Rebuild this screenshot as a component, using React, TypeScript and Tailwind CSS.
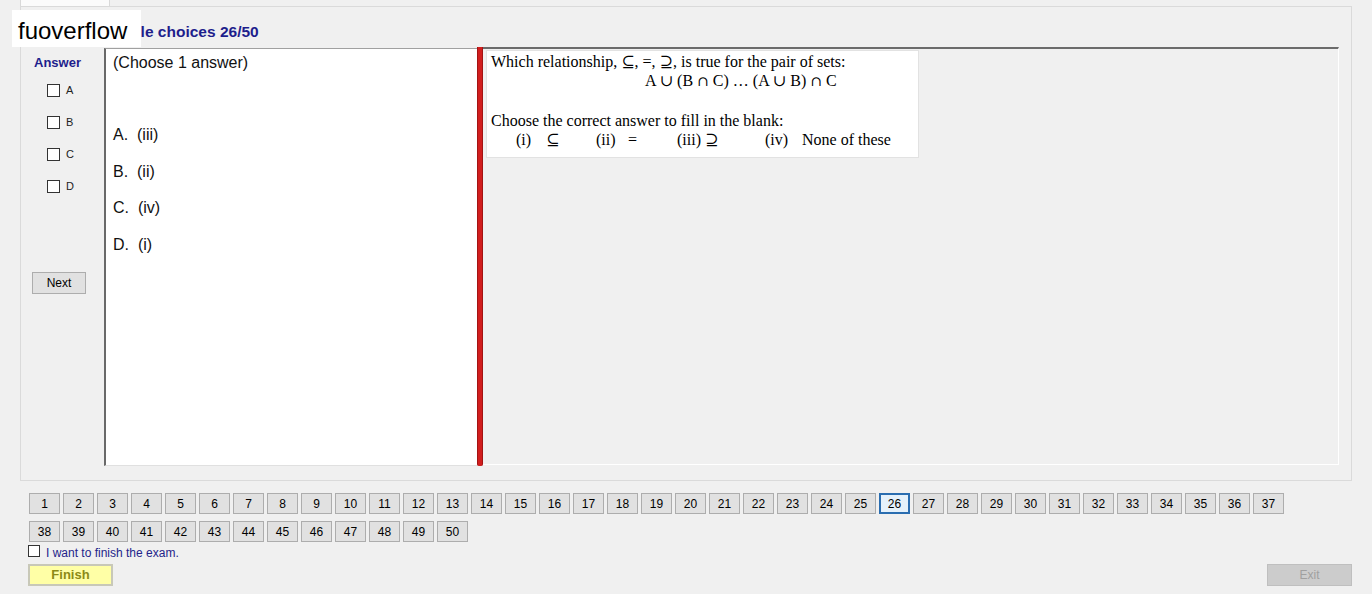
import React from 'react';

const sans = { fontFamily: '"Liberation Sans", Arial, sans-serif' };
const serif = { fontFamily: '"Liberation Serif", "Times New Roman", "DejaVu Serif", serif' };

const QuestionButton = ({ n, active }: { n: number; active?: boolean }) => (
  <div
    className={
      active
        ? 'w-[31px] h-[21px] flex items-center justify-center text-[12px] text-black bg-[#e5f1fb] border-2 border-[#2a6db0]'
        : 'w-[31px] h-[21px] flex items-center justify-center text-[12px] text-black bg-[#e1e1e1] border border-[#adadad]'
    }
  >
    {n}
  </div>
);

const AnswerBox = ({ label }: { label: string }) => (
  <div className="flex items-center gap-[6px] h-[14px]">
    <div className="w-[13px] h-[13px] bg-white border border-[#333]"></div>
    <span className="text-[11px] text-[#222] leading-none">{label}</span>
  </div>
);

export default function App() {
  const current = 26;

  return (
    <div className="w-[1372px] h-[594px] bg-[#f0f0f0] relative overflow-hidden" style={sans}>
      {/* tab header */}
      <div className="h-[6px] flex">
        <div className="ml-[20px] w-[90px] h-full bg-[#fbfbfb] border-x border-[#d9d9d9]"></div>
      </div>

      {/* tab page */}
      <div className="ml-[20px] w-[1332px] h-[475px] border border-[#dadada] bg-[#f0f0f0]">
        <div className="h-[40px] flex items-end pb-[8px]">
          <div className="ml-[74px] text-[15.5px] font-bold text-[#1e1e8c] leading-none">Multiple choices 26/50</div>
        </div>

        <div className="flex h-[419px]">
          {/* answer column */}
          <div className="w-[83px] flex flex-col">
            <div className="mt-[9px] ml-[13px] text-[13px] font-bold text-[#1e1e8c] leading-none">Answer</div>
            <div className="ml-[26px] mt-[14px] flex flex-col gap-[18px]">
              <AnswerBox label="A" />
              <AnswerBox label="B" />
              <AnswerBox label="C" />
              <AnswerBox label="D" />
            </div>
            <div className="ml-[11px] mt-[79px] w-[54px] h-[22px] bg-[#e1e1e1] border border-[#adadad] flex items-center justify-center text-[12px] text-black">
              Next
            </div>
          </div>

          {/* options panel */}
          <div className="w-[373px] h-[418px] mt-[1px] bg-white border-t border-t-[#a0a0a0] border-l-2 border-l-[#696969] border-b border-b-[#e0e0e0] px-[7px] pt-[5px] text-[16px] text-[#111]">
            <div className="leading-[18px]">(Choose 1 answer)</div>
            <div className="mt-[45px] flex flex-col">
              <div className="leading-[36.5px]">A.&nbsp; (iii)</div>
              <div className="leading-[36.5px]">B.&nbsp; (ii)</div>
              <div className="leading-[36.5px]">C.&nbsp; (iv)</div>
              <div className="leading-[36.5px]">D.&nbsp; (i)</div>
            </div>
          </div>

          {/* splitter */}
          <div className="w-[6px] h-[419px] bg-[#d11e1e] border-x border-[#a31313] rounded-b-[2px]"></div>

          {/* question panel */}
          <div className="w-[856px] h-[418px] border-t-2 border-t-[#6b6b6b] border-r border-r-white border-b border-b-white p-[1px] pl-[3px]">
            <div className="w-[433px] h-[108px] bg-white border border-[#e2e2e2] pl-[4px] text-[16px] text-black" style={serif}>
              <div className="leading-[19px] mt-[1px]">Which relationship, ⊆, =, ⊇, is true for the pair of sets:</div>
              <div className="leading-[19px] pl-[154px]">
                A ∪ (B <span style={{ fontFamily: '"DejaVu Serif", serif' }} className="text-[14px]">∩</span> C) … (A ∪ B){' '}
                <span style={{ fontFamily: '"DejaVu Serif", serif' }} className="text-[14px]">∩</span> C
              </div>
              <div className="leading-[19px] mt-[20px]">Choose the correct answer to fill in the blank:</div>
              <div className="leading-[19px] pl-[25px] flex">
                <span className="w-[30px]">(i)</span>
                <span className="w-[50px]">⊆</span>
                <span className="w-[32px]">(ii)</span>
                <span className="w-[49px]">=</span>
                <span className="w-[28px]">(iii)</span>
                <span className="w-[60px]">⊇</span>
                <span className="w-[37px]">(iv)</span>
                <span>None of these</span>
              </div>
            </div>
          </div>
        </div>
      </div>

      {/* question navigator */}
      <div className="pl-[29px] pt-[12px] w-[1300px]">
        <div className="flex flex-wrap gap-x-[3px] gap-y-[7px] w-[1260px]">
          {Array.from({ length: 50 }, (_, i) => (
            <QuestionButton key={i} n={i + 1} active={i + 1 === current} />
          ))}
        </div>
      </div>

      <div className="pl-[28px] mt-[2px] flex items-center gap-[6px] h-[14px]">
        <div className="w-[12px] h-[12px] bg-white border border-[#333]"></div>
        <span className="text-[12px] text-[#24248a] leading-none mt-[3px]">I want to finish the exam.</span>
      </div>

      <div className="pl-[28px] pr-[20px] mt-[6px] flex justify-between">
        <div className="w-[85px] h-[22px] bg-[#ffffa6] border-2 border-[#c8c8b8] flex items-center justify-center text-[13px] font-bold text-[#8c8a16]">
          Finish
        </div>
        <div className="w-[85px] h-[22px] bg-[#cccccc] border border-[#bfbfbf] flex items-center justify-center text-[12px] text-[#a0a0a0]">
          Exit
        </div>
      </div>

      {/* watermark */}
      <div className="absolute left-[12px] top-[10px] w-[129px] h-[37px] bg-white flex items-center pl-[6px] pt-[5px] text-[24px] text-black">
        fuoverflow
      </div>
    </div>
  );
}
